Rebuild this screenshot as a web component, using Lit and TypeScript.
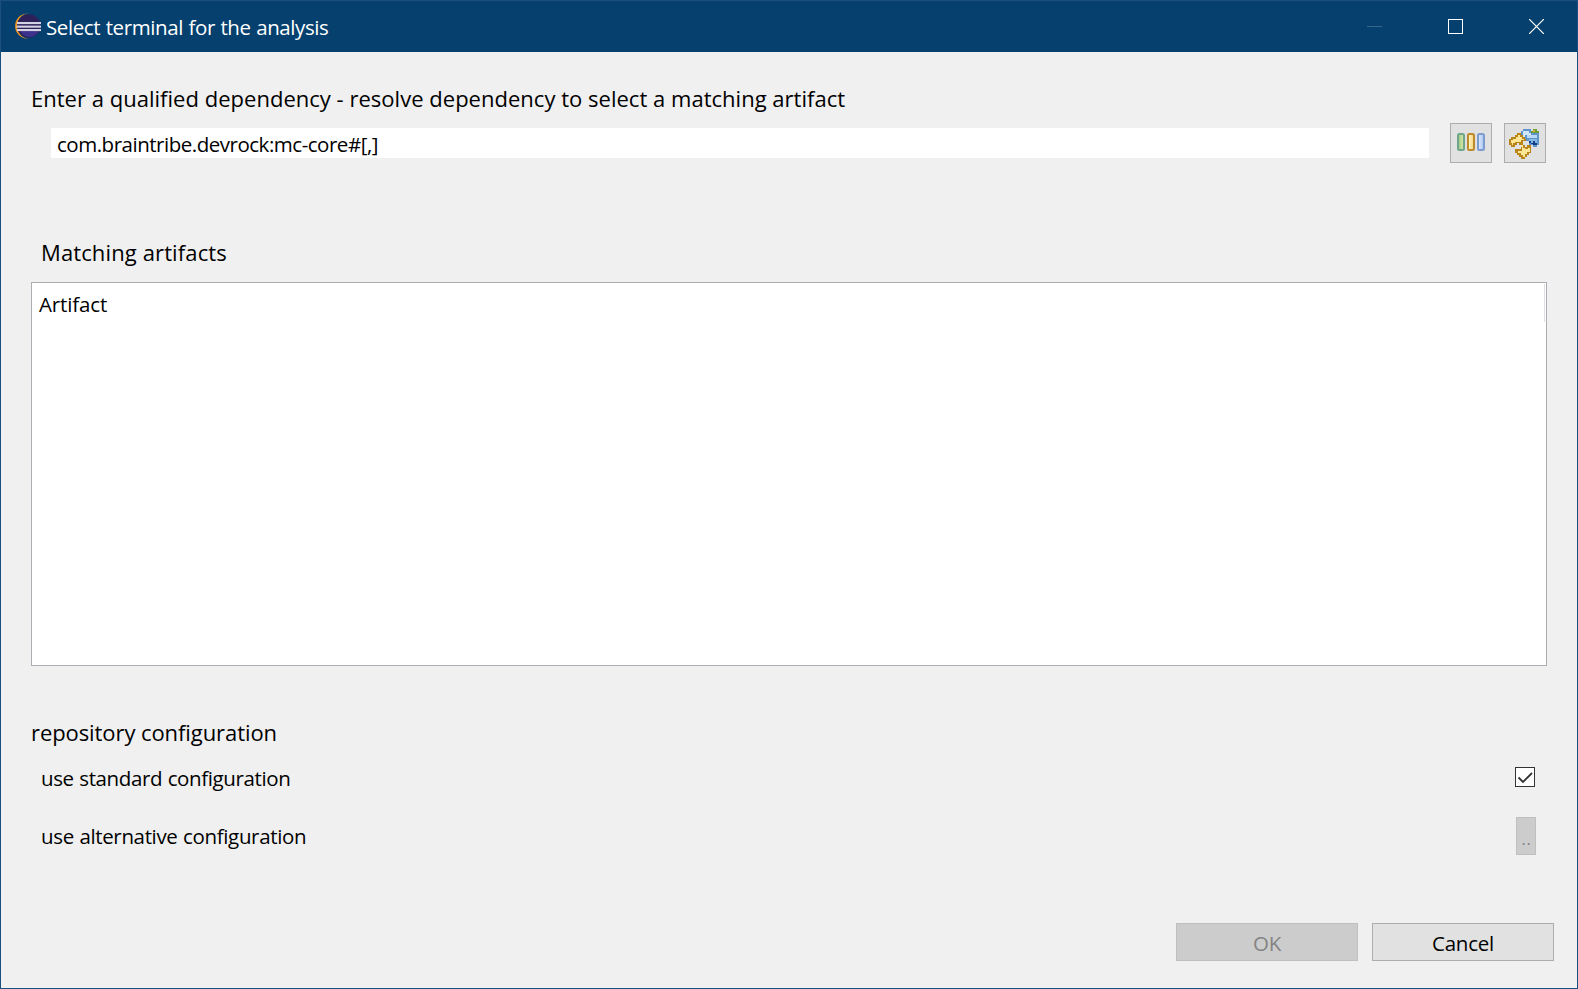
import { LitElement, html, css, svg } from "lit";
import { customElement } from "lit/decorators.js";

const eclipse = html`<svg width="27" height="27" viewBox="0 0 27 27">
  <circle cx="12.7" cy="13" r="12.6" fill="#f0941e"/>
  <circle cx="15.2" cy="13" r="13" fill="#05406e"/>
  <circle cx="13.9" cy="13" r="11.8" fill="#2e2058"/>
  <path d="M5 17h19a10 10 0 0 1-19 0z" fill="#40369a" opacity=".8"/>
  <g fill="#d3d2e3"><rect x="2" y="9" width="24" height="2.1"/><rect x="1.6" y="12.6" width="24.4" height="2.1"/><rect x="2" y="16" width="24" height="2.1"/></g>
</svg>`;

const capsule = (x: number, edge: string, from: string, to: string, id: string) => svg`
  <linearGradient id=${id} x2="1"><stop offset=".2" stop-color=${from}/><stop offset=".8" stop-color=${to}/></linearGradient>
  <rect x=${x + 1} y="11" width="6" height="16" rx="1.5" fill="url(#${id})" stroke=${edge} stroke-width="2"/>`;

const columns = html`<svg width="42" height="40" viewBox="0 0 42 40">
  ${capsule(7, "#6fa68b", "#a5cf8c", "#d3e6a4", "a")}
  ${capsule(17, "#bd8a2c", "#fff3bd", "#f7d98a", "b")}
  ${capsule(27, "#7c9cd0", "#d5e4fa", "#b4cdf3", "c")}
</svg>`;

const resolve = html`<svg width="42" height="40" viewBox="0 0 42 40">
  <path d="M19 6h8v2h6v2h2v12h-2v2h-4v-2h-4v-4h-4v-4h-4V8h2z" fill="#5f93cb"/>
  <path d="M19 8h6v2h2v2h-6v2h-2z" fill="#d3e8f7"/>
  <path d="M23 12h10v3H23z" fill="#b9d9f2"/>
  <path d="M25 16h8v4h-8z" fill="#86b8e6"/>
  <path d="M25 18h2v2h2v-2h2v2h2v2h-4v-1h-2v-1h-2z" fill="#123f83"/>
  <path d="M27 8h2V6h4v2h2v2h-8z" fill="#6b9e2e"/><path d="M29 7h2v2h-2z" fill="#d8b03b"/>
  <path d="M13 10h4v2h2v2h2v2h1v2h-3v2h-6v2h-2v2H7v-2H5v-6h2v-2h4v-2h2z" fill="#b98518"/>
  <path d="M14 12h2v2h2v2h2v1h-3v2h-6v1H9v2H8v-2H7v-3h2v-1h3v-2h2z" fill="#fde795"/>
  <path d="M15 20h4v2h2v2h2v-2h4v8h-2v2h-2v2h-2v2h-4v-2h-2v-2h-2v-2h-2v-4h6v-4h-2z" fill="#b98518"/>
  <path d="M17 22h2v3h2v1h3v-1h2v4h-3v2h-2v3h-2v-2h-2v-2h-3v-2h4v-4h-1z" fill="#fde795"/>
</svg>`;

@customElement("app-root")
export class AppRoot extends LitElement {
  static styles = css`
    :host { display: block; }
    * { box-sizing: border-box; }
    svg { display: block; }
    .window { width: 1578px; height: 989px; display: flex; flex-direction: column; background: #f0f0f0;
      border: 1px solid #1b4f80; color: #000; font: 20.5px/28px "Open Sans", "Noto Sans", sans-serif; white-space: nowrap; word-spacing: 0.6px; }
    .bar { height: 51px; flex: none; background: #05406e; color: #fff; display: flex; align-items: flex-start; padding: 12px 33px 0 14px; }
    .title { margin-left: 4px; letter-spacing: -0.4px; flex: 1; }
    .controls { display: flex; gap: 66px; padding-top: 6px; }
    .body { flex: 1; display: flex; flex-direction: column; }
    .big { font-size: 22px; line-height: 30px; word-spacing: 0; }
    .prompt { margin: 31px 0 0 30px; letter-spacing: 0.02px; }
    .entry { display: flex; align-items: flex-start; padding: 10px 30px 0 50px; }
    .field { width: 1378px; height: 30px; margin-top: 5px; background: #fff; padding: 2px 6px; letter-spacing: -0.48px; }
    .tool { width: 42px; height: 40px; border: 1px solid #adadad; background: #e1e1e1; margin-left: 12px; }
    .tool svg { margin: -1px; }
    .tool.first { margin-left: 21px; }
    .matching { margin: 74px 0 0 40px; letter-spacing: 0.12px; }
    .table { margin: 15px 30px 0 30px; height: 384px; border: 1px solid #abadb3; background: #fff; padding: 1px; }
    .head { height: 38px; width: 1512px; border-right: 1px solid #dedfe1; padding: 6px; letter-spacing: -0.15px; }
    .repo { margin: 51px 0 0 30px; letter-spacing: -0.08px; }
    .row { display: flex; justify-content: space-between; letter-spacing: -0.38px; padding-left: 40px; }
    .standard { margin-top: 17px; padding-right: 42px; }
    .alternative { margin-top: 25px; padding-right: 41px; height: 38px; letter-spacing: -0.35px; }
    .check { width: 20px; height: 20px; border: 1px solid #333; background: #fff; margin-top: 3px; }
    .dots { width: 20px; height: 38px; border: 1px solid #bfbfbf; background: #ccc; color: #838383; font-size: 16px; letter-spacing: .8px; padding: 7px 0 0 4.5px; }
    .alternative .text { padding-top: 5px; }
    .actions { display: flex; justify-content: flex-end; gap: 14px; padding: 68px 23px 0 0; }
    .button { width: 182px; height: 38px; border: 1px solid #adadad; background: #e1e1e1; text-align: center; padding-top: 5px; letter-spacing: -0.25px; }
    .disabled { background: #ccc; border-color: #bfbfbf; color: #838383; }
  `;

  render() {
    return html`<div class="window">
      <div class="bar">${eclipse}<div class="title">Select terminal for the analysis</div>
        <div class="controls">
          <svg width="15" height="15"><path d="M0 7.5h15" stroke="#37668b"/></svg>
          <svg width="15" height="15"><rect x=".5" y=".5" width="14" height="14" fill="none" stroke="#fff"/></svg>
          <svg width="15" height="15"><path d="M0 0l15 15M15 0L0 15" stroke="#fff" stroke-width="1.2"/></svg>
        </div>
      </div>
      <div class="body">
        <div class="prompt big">Enter a qualified dependency - resolve dependency to select a matching artifact</div>
        <div class="entry"><div class="field">com.braintribe.devrock:mc-core#[,]</div>
          <div class="tool first">${columns}</div><div class="tool">${resolve}</div></div>
        <div class="matching big">Matching artifacts</div>
        <div class="table"><div class="head">Artifact</div></div>
        <div class="repo big">repository configuration</div>
        <div class="row standard"><div class="text">use standard configuration</div>
          <div class="check"><svg width="18" height="18"><path d="M2.5 9.5l4.5 4.5L16 5" fill="none" stroke="#333" stroke-width="1.8"/></svg></div></div>
        <div class="row alternative"><div class="text">use alternative configuration</div><div class="dots">..</div></div>
        <div class="actions"><div class="button disabled">OK</div><div class="button">Cancel</div></div>
      </div>
    </div>`;
  }
}
